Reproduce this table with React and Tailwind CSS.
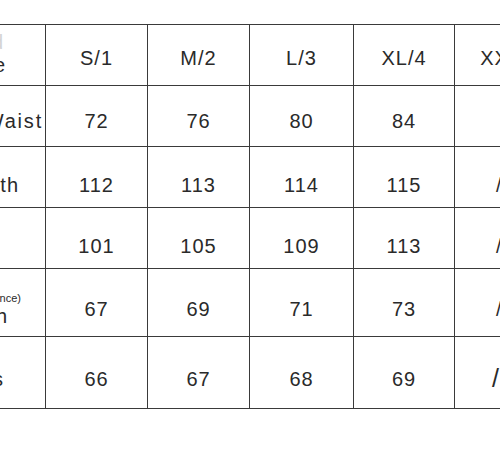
import React from 'react';

const line = 'border-[#3a3a3a]';

const widths = ['w-[146px]', 'w-[102px]', 'w-[102px]', 'w-[104px]', 'w-[101px]', 'w-[110px]'];

const rows = [
    {
        h: 'h-[61px]',
        pt: 'pt-[5px]',
        label: (
            <div className="flex flex-col items-end pb-[7px] leading-[23px]">
                <span className="pr-[41px] text-[#d4d4d4]">Standard</span>
                <span className="pr-[39px]">Size</span>
            </div>
        ),
        cells: ['S/1', 'M/2', 'L/3', 'XL/4', 'XXL/5'],
    },
    {
        h: 'h-[61px]',
        pt: 'pt-[10px]',
        label: <span className="pr-[2px] tracking-[1.8px]">Waist</span>,
        cells: ['72', '76', '80', '84', ''],
    },
    {
        h: 'h-[61px]',
        pt: 'pt-[16px]',
        label: <span className="pr-[26px]">Length</span>,
        cells: ['112', '113', '114', '115', '/'],
    },
    {
        h: 'h-[61px]',
        pt: 'pt-[16px]',
        label: <span className="pr-[70px]">Hip</span>,
        cells: ['101', '105', '109', '113', '/'],
    },
    {
        h: 'h-[68px]',
        pt: 'pt-[12px]',
        label: (
            <div className="flex flex-col items-end">
                <span className="pr-[24px] text-[11px] leading-[14px] tracking-normal">(For reference)</span>
                <span className="pr-[37px] leading-[22px]">Length</span>
            </div>
        ),
        cells: ['67', '69', '71', '73', '/'],
    },
    {
        h: 'h-[72px]',
        pt: 'pt-[12px]',
        label: <span className="pr-[41px]">Hips</span>,
        cells: ['66', '67', '68', '69', '/'],
        bigSlash: true,
    },
];

function Row({ row }) {
    return (
        <div className={`flex border-b ${line} ${row.h}`}>
            <div className={`${widths[0]} shrink-0 border-r ${line} flex items-center justify-end ${row.pt}`}>
                {row.label}
            </div>
            {row.cells.map((c, i) => {
                const last = i === 4;
                if (last && c === '/') {
                    return (
                        <div key={i} className={`${widths[5]} shrink-0 flex items-center ${row.pt}`}>
                            {row.bigSlash ? (
                                <span className="pl-[37px] text-[25px] leading-none">/</span>
                            ) : (
                                <span className="pl-[41px] leading-none">/</span>
                            )}
                        </div>
                    );
                }
                return (
                    <div
                        key={i}
                        className={`${widths[i + 1]} shrink-0 ${last ? '' : `border-r ${line}`} flex items-center justify-center ${row.pt}`}
                    >
                        <span className="leading-none">{c}</span>
                    </div>
                );
            })}
        </div>
    );
}

export default function App() {
    return (
        <div className="w-[500px] h-[453px] overflow-hidden bg-white">
            <div
                className={`ml-[-100px] mt-[24px] w-[660px] border-t ${line} text-[20px] tracking-[1px] text-[#2a2a2a]`}
                style={{ fontFamily: '"Liberation Sans", Arial, sans-serif' }}
            >
                {rows.map((r, i) => (
                    <Row key={i} row={r} />
                ))}
            </div>
        </div>
    );
}
